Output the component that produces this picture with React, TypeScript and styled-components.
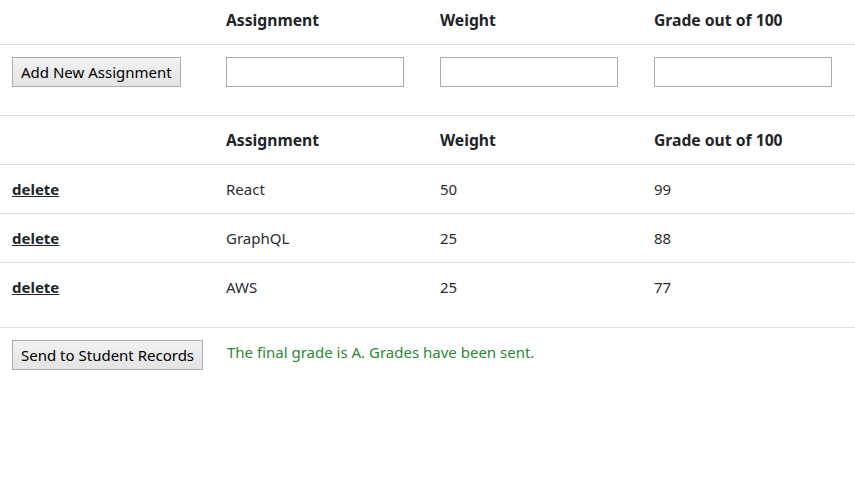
import { FC } from "react";
import styled, { createGlobalStyle } from "styled-components";

type Assignment = { name: string; weight: number; grade: number };

const assignments: Assignment[] = [
  { name: "React", weight: 50, grade: 99 },
  { name: "GraphQL", weight: 25, grade: 88 },
  { name: "AWS", weight: 25, grade: 77 },
];

const headers = ["Assignment", "Weight", "Grade out of 100"];

const App: FC = () => {
  return (
    <>
      <GlobalStyle />
      {/* 入力フォーム */}
      <STable>
        <SRow $first>
          <SHead $top />
          {headers.map((h) => (
            <SHead $top key={h}>{h}</SHead>
          ))}
        </SRow>
        <SRow>
          <SCell>
            <SButton>Add New Assignment</SButton>
          </SCell>
          <SCell><SInput type="text" /></SCell>
          <SCell><SInput type="text" /></SCell>
          <SCell><SInput type="text" /></SCell>
        </SRow>
      </STable>

      {/* 課題一覧 */}
      <STable>
        <SRow>
          <SHead />
          {headers.map((h) => (
            <SHead key={h}>{h}</SHead>
          ))}
        </SRow>
        {assignments.map((a) => (
          <SRow key={a.name}>
            <SCell><SDelete href="#">delete</SDelete></SCell>
            <SCell>{a.name}</SCell>
            <SCell>{a.weight}</SCell>
            <SCell>{a.grade}</SCell>
          </SRow>
        ))}
      </STable>

      {/* 送信 */}
      <STable>
        <SRow>
          <SCell>
            <SButton>Send to Student Records</SButton>
          </SCell>
          <SMessage>The final grade is A. Grades have been sent.</SMessage>
        </SRow>
      </STable>
    </>
  );
};

export default App;

//Style
const GlobalStyle = createGlobalStyle`
  body {
    margin: 0;
    background: #fff;
    color: #212529;
    font-family: "Noto Sans", "Open Sans", sans-serif;
    font-size: 16px;
    line-height: 1.5;
  }
`;

const STable = styled.div`
  width: 855px;
  margin-bottom: 16px;
`;

const SRow = styled.div<{ $first?: boolean }>`
  display: grid;
  grid-template-columns: 214px 214px 214px 1fr;
  border-top: ${(p) => (p.$first ? "none" : "1px solid #dee2e6")};
`;

const SHead = styled.div<{ $top?: boolean }>`
  padding: ${(p) => (p.$top ? "8px" : "12px")} 12px 12px;
  font-weight: 700;
  font-size: 15.7px;
  line-height: 24px;
`;

const SCell = styled.div`
  padding: 12px;
  font-size: 15px;
  line-height: 24px;
  color: #2a2d31;
`;

const SMessage = styled(SCell)`
  grid-column: span 3;
  padding-left: 13px;
  color: #2b8a2f;
`;

const SButton = styled.button`
  height: 30px;
  padding: 0 8px;
  white-space: nowrap;
  font-family: inherit;
  font-size: 15px;
  color: #000;
  background: linear-gradient(#f2f2f2, #e3e3e3);
  border: 1px solid #acacac;
  border-radius: 0;
`;

const SInput = styled.input`
  display: block;
  box-sizing: border-box;
  width: 178px;
  height: 30px;
  border: 1px solid #a9a9a9;
  font-family: inherit;
  font-size: 15px;
  padding: 0 4px;
`;

const SDelete = styled.a`
  font-weight: 700;
  color: #212529;
  text-decoration: underline;
`;
